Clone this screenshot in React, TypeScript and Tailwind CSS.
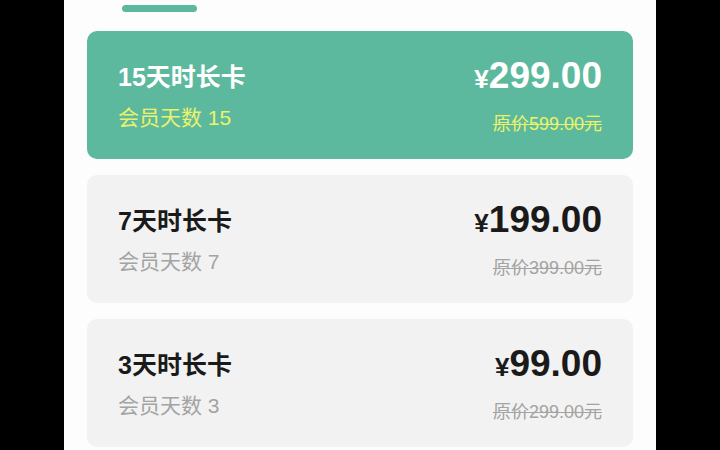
import React from 'react';

type Plan = {
  name: string;
  days: number;
  price: string;
  original: string;
};

const plans: Plan[] = [
  { name: '15天时长卡', days: 15, price: '299.00', original: '599.00' },
  { name: '7天时长卡', days: 7, price: '199.00', original: '399.00' },
  { name: '3天时长卡', days: 3, price: '99.00', original: '299.00' },
];

const font = { fontFamily: '"Liberation Sans", "Noto Sans CJK SC", sans-serif' };

const PlanCard: React.FC<{ plan: Plan; active: boolean }> = ({ plan, active }) => (
  <div
    className={`flex h-[128px] items-center justify-between rounded-[10px] px-[31px] ${
      active ? 'bg-[#5db99d]' : 'bg-[#f2f2f2]'
    }`}
  >
    <div className="flex flex-col pt-[3px]">
      <span className={`text-[25px] font-bold leading-[30px] ${active ? 'text-white' : 'text-[#1a1a1a]'}`}>
        {plan.name}
      </span>
      <span className={`mt-[13px] text-[21px] leading-[26px] ${active ? 'text-[#ecf26c]' : 'text-[#a3a3a3]'}`}>
        会员天数 {plan.days}
      </span>
    </div>
    <div className="flex flex-col items-end">
      <span className={`font-bold leading-[40px] ${active ? 'text-white' : 'text-[#1a1a1a]'}`}>
        <span className="text-[26px]">¥</span>
        <span className="text-[37px]">{plan.price}</span>
      </span>
      <span
        className={`mt-[10px] text-[18px] leading-[22px] line-through ${
          active ? 'text-[#ecf26c]' : 'text-[#a3a3a3]'
        }`}
      >
        原价{plan.original}元
      </span>
    </div>
  </div>
);

const App: React.FC = () => {
  return (
    <div className="flex h-[450px] w-[720px] justify-center overflow-hidden bg-black" style={font}>
      <div className="w-[592px] bg-[#fdfdfd] px-[23px]">
        {/* Tab indicator */}
        <div className="ml-[35px] mt-[5px] h-[7px] w-[75px] rounded-full bg-[#5db99d]" />

        {/* Plan list */}
        <div className="mt-[19px] flex flex-col gap-[16px]">
          {plans.map((plan, i) => (
            <PlanCard key={plan.name} plan={plan} active={i === 0} />
          ))}
        </div>
      </div>
    </div>
  );
};

export default App;
